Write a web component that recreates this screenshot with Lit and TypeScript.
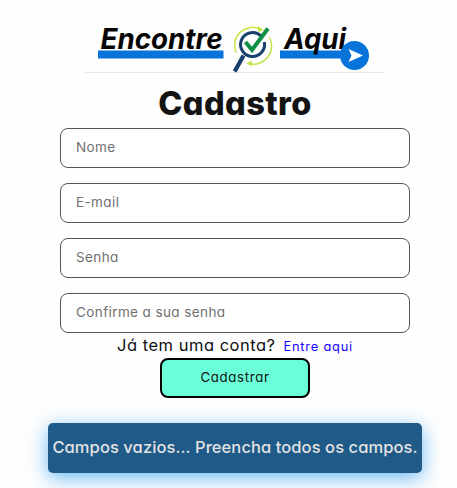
import { LitElement, html, css } from "lit";
import { customElement } from "lit/decorators.js";

@customElement("brand-logo")
class BrandLogo extends LitElement {
  static styles = css`
    :host { display: block; width: 300px; height: 73px; }
    svg { display: block; }
    .word { font: italic 700 28px Inter, "Liberation Sans", sans-serif; fill: #050505; }
  `;
  render() {
    return html`<svg width="300" height="73" viewBox="85 0 300 73" role="img" aria-label="Encontre Aqui">
      <path d="M85 72.5H385" stroke="#e6e6e6" />
      <path d="M98 50.5H223.5V58.5H98ZM280 50.5H350V58.5H280Z" fill="#0874d9" />
      <text class="word" x="100.5" y="49.3" textLength="122" lengthAdjust="spacingAndGlyphs">Encontre</text>
      <text class="word" x="284" y="49.3" textLength="62" lengthAdjust="spacingAndGlyphs">Aqui</text>
      <circle cx="354.5" cy="55.5" r="14.5" fill="#0874d9" />
      <path d="M348.5 49L363 55.5L348.5 62L351.5 55.5Z" fill="#fff" />
      <g fill="none">
        <path d="M236 52.500A18 18 0 0 1 260 29M269.500 37.500A18 18 0 0 1 249 63.500" stroke="#c4e447" stroke-width="1.500" />
        <path d="M258 26L263.500 30L258 32ZM251.500 60.500L246.500 63.500L252 66.500Z" fill="#c4e447" />
        <path d="M261 36A12 12 0 1 0 264.300 42" stroke="#173f6b" stroke-width="3" />
        <path d="M243.500 55.500L234.700 71.500" stroke="#173f6b" stroke-width="4.200" />
        <path d="M245.500 42L252 50L268 28.500" stroke="#109044" stroke-width="4" />
      </g>
    </svg>`;
  }
}

@customElement("app-root")
class AppRoot extends LitElement {
  static styles = css`
    :host {
      display: flex; flex-direction: column; align-items: center;
      box-sizing: border-box; width: 470px; height: 488px; overflow: hidden;
      background: #fefefe; color: #111;
      font-family: Inter, "Noto Sans", sans-serif;
      font-feature-settings: "cv11";
    }
    h1 { margin: 7px 0 0; height: 48px; font-size: 32.5px; line-height: 48px; font-weight: 800; color: #141414; letter-spacing: 0.4px; }
    form { display: flex; flex-direction: column; align-items: center; width: 350px; }
    .fields { display: grid; gap: 15px; width: 100%; }
    input {
      box-sizing: border-box; width: 100%; height: 40px; margin: 0; padding: 0 15px 2px;
      border: 1px solid #555; border-radius: 8px; background: #fff;
      font: 400 13.5px Inter, sans-serif; font-feature-settings: "cv11"; letter-spacing: 0.4px;
    }
    input::placeholder { color: #707070; opacity: 1; }
    .account { display: flex; align-items: baseline; gap: 8px; height: 25px; line-height: 25px; font-size: 16.5px; letter-spacing: 0.5px; white-space: nowrap; }
    a { color: #1200ff; font-size: 12.8px; letter-spacing: 0.8px; text-decoration: none; }
    button {
      box-sizing: border-box; width: 150px; height: 40px; padding: 0 0 2px;
      border: 2px solid #000; border-radius: 8px; background: #6affd8; color: #111;
      font: 13.2px Inter, sans-serif; font-feature-settings: "cv11"; letter-spacing: 0.7px;
    }
    .notice {
      box-sizing: border-box; width: 374px; height: 50px; margin-top: 25px; flex: none;
      border-radius: 5px; background: #1f5a88; color: #e3e3e3;
      box-shadow: 0 5px 20px #2b9df0b0;
      text-align: center; line-height: 49px; font-size: 16.5px; letter-spacing: 0.08px; font-weight: 540; white-space: nowrap;
    }
  `;
  render() {
    return html`
      <brand-logo></brand-logo>
      <h1>Cadastro</h1>
      <form>
        <div class="fields">
          <input placeholder="Nome" />
          <input placeholder="E-mail" />
          <input type="password" placeholder="Senha" />
          <input type="password" placeholder="Confirme a sua senha" />
        </div>
        <div class="account"><span>Já tem uma conta?</span><a href="#">Entre aqui</a></div>
        <button type="button">Cadastrar</button>
      </form>
      <div class="notice" role="alert">Campos vazios... Preencha todos os campos.</div>
    `;
  }
}
